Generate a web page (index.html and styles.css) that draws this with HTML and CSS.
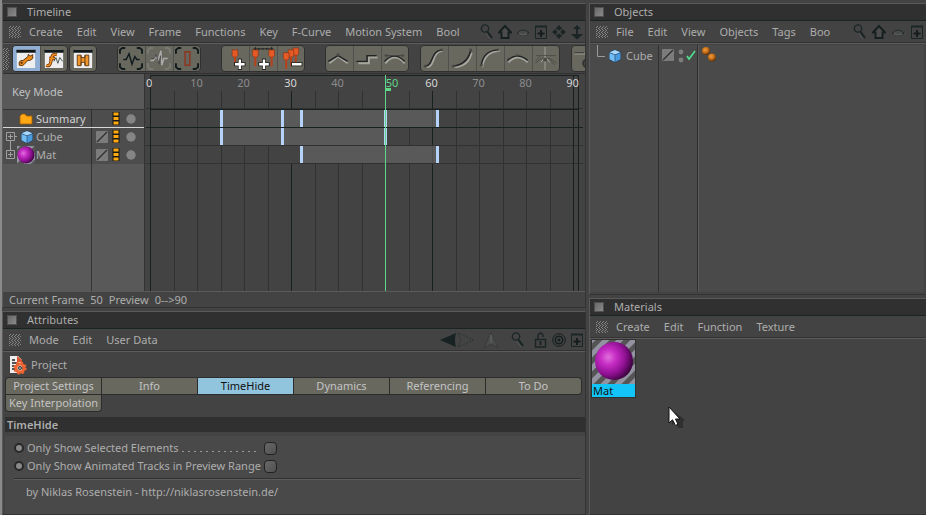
FILE: index.html
```
<!DOCTYPE html>
<html lang="en">
<head>
<meta charset="utf-8">
<title>Timeline</title>
<link rel="stylesheet" href="styles.css">
</head>
<body>
<svg class="defs" aria-hidden="true">
  <defs>
    <pattern id="dots" width="3" height="4" patternUnits="userSpaceOnUse"><path d="M0 1h1M1 0h1M0 3h1M2 2h1" stroke="#858585" transform="translate(0 .5)"/></pattern>
    <pattern id="stripes" width="14" height="14" patternUnits="userSpaceOnUse"><rect width="14" height="14" fill="#555"/><path d="M-4 4L4-4M-4 18L18-4M10 18L18 10" stroke="#9292a0" stroke-width="5"/></pattern>
    <radialGradient id="ball" cx=".35" cy=".4" r=".7"><stop offset="0" stop-color="#e070dc"/><stop offset=".3" stop-color="#c62cc4"/><stop offset=".65" stop-color="#8d1090"/><stop offset="1" stop-color="#2e0030"/></radialGradient>
    <radialGradient id="orange" cx=".4" cy=".35" r=".7"><stop offset="0" stop-color="#f09a3c"/><stop offset=".5" stop-color="#c87018"/><stop offset="1" stop-color="#4a2806"/></radialGradient>
    <symbol id="grip" viewBox="0 0 12 12"><rect width="12" height="12" fill="url(#dots)"/></symbol>
    <symbol id="search" viewBox="0 0 14 16"><circle cx="5" cy="4.500" r="3.700" fill="none" stroke="#1b2525" stroke-width="1.300"/><path d="M7.500 8L12 14" stroke="#1b2525" stroke-width="2.200"/><path d="M6 9L10 15" stroke="#666" stroke-width=".6"/></symbol>
    <symbol id="home" viewBox="0 0 14 16"><path d="M1 8.500L7 2L13 8.500H10.500V14H3.500V8.500Z" fill="#4c4c4c" stroke="#162020" stroke-width="2"/></symbol>
    <symbol id="lens" viewBox="0 0 14 16"><path d="M1 9Q7 3 13 9Q7 14 1 9Z" fill="#4a4a4a" stroke="#222c2c"/><path d="M3 10Q7 12 11 10" fill="none" stroke="#666"/></symbol>
    <symbol id="plus" viewBox="0 0 14 16"><path d="M1.500 2.500H12.500V14.500H1.500Z" fill="none" stroke="#1b2525"/><path d="M1 2.500H13" stroke="#1b2525" stroke-width="2"/><path d="M7 6V13M3.500 9.500H10.500" stroke="#151d1d" stroke-width="2"/></symbol>
    <symbol id="move" viewBox="0 0 14 16"><path d="M7 1L10 4.500L7 6.500L4 4.500ZM7 15L10 11.500L7 9.500L4 11.500ZM0 8L3.500 5L5.500 8L3.500 11ZM14 8L10.500 5L8.500 8L10.500 11Z" fill="#1b2525"/></symbol>
    <symbol id="updown" viewBox="0 0 14 16"><path d="M7 1L11 5H8V10H13L7 15.500L1 10H6V5H3Z" fill="#1b2525"/></symbol>
    <symbol id="cube" viewBox="0 0 14 14"><path d="M7 .5L13 3V10.500L7 13.500L1 10.500V3Z" fill="#1c3d5a"/><path d="M7 1L12.500 3.200L7 5.500L1.500 3.200Z" fill="#a8d8ff"/><path d="M1.500 4L6.700 6V13L1.500 10.300Z" fill="#72bdf6"/><path d="M7.300 6L12.500 4V10.300L7.300 13Z" fill="#4b9ade"/></symbol>
    <symbol id="layer" viewBox="0 0 12 12"><rect width="12" height="12" rx="1" fill="#7d7d7d"/><path d="M1 11L11 1" stroke="#333" stroke-width="1.400"/><path d="M0 6L6 0M6 12L12 6" stroke="#707070" stroke-width=".6"/></symbol>
    <symbol id="film" viewBox="0 0 8 14"><rect x=".5" width="7" height="13" fill="#171717"/><path d="M1.500 2H6.500M1.500 6.500H6.500M1.500 11H6.500" stroke="#ffaa10" stroke-width="3"/></symbol>
    <symbol id="dot" viewBox="0 0 10 10"><circle cx="5" cy="5" r="4.700" fill="#858585"/></symbol>
    <symbol id="folder" viewBox="0 0 14 12"><path d="M1 3L3 1H6L7.500 3H13V11H1Z" fill="#ffa814" stroke="#a35c00" stroke-width=".8"/></symbol>
    <symbol id="sphere" viewBox="0 0 18 18"><rect width="18" height="18" fill="url(#stripes)"/><circle cx="9" cy="9" r="8.500" fill="url(#ball)"/></symbol>
    <symbol id="window" viewBox="0 0 26 26"><rect x="3.500" y="4" width="19" height="19" rx="1" fill="#eee"/><path d="M3 4H23V7H3Z" fill="#0f1719"/></symbol>
    <symbol id="frame" viewBox="0 0 26 26"><path d="M1.500 8V4L4 2H7M19 2H22L24.500 4V8M1.500 18V22L4 24H7M19 24H22L24.500 22V18" fill="none" stroke="currentColor" stroke-width="2"/></symbol>
    <symbol id="pin" viewBox="0 0 8 20"><path d="M1 1H7V7L5 9H3L1 7Z" fill="#e45a26" stroke="#7a2c10" stroke-width=".6"/><path d="M4 8V18" stroke="#b94019" stroke-width="2"/></symbol>
  </defs>
</svg>

<main class="workspace">
  <div class="column">
    <section class="panel timeline">
      <header class="title"><i class="box"></i><h2>Timeline</h2></header>
      <nav class="menu">
        <svg class="grip"><use href="#grip"/></svg>
        <button>Create</button><button>Edit</button><button>View</button><button>Frame</button><button>Functions</button><button>Key</button><button>F-Curve</button><button>Motion System</button><button>Bool</button>
        <div class="tools">
          <svg class="icon"><use href="#search"/></svg><svg class="icon"><use href="#home"/></svg><svg class="icon"><use href="#lens"/></svg><svg class="icon"><use href="#plus"/></svg><svg class="icon"><use href="#move"/></svg><svg class="icon"><use href="#updown"/></svg>
        </div>
      </nav>
      <div class="toolbar">
        <svg class="sidegrip"><rect width="6" height="22" fill="url(#dots)"/></svg>
        <div class="group">
          <button class="on" aria-label="Key mode"><svg viewBox="0 0 26 26"><use href="#window"/><path d="M6 20Q5 14.500 10 15L15 11L15.500 8.500L17.500 10.500L20 9L20 13L17 15L15 15L12 18Q10 22 6 20Z" fill="#e98a16" stroke="#5d3410"/><circle cx="8.500" cy="17.500" r="1.200" fill="#5d3410"/></svg></button>
          <button aria-label="F-Curve mode"><svg viewBox="0 0 26 26"><use href="#window"/><path d="M5 20Q9 22 10 15L11 11Q12 8 16 9M8 13H14" fill="none" stroke="#733810" stroke-width="3.400"/><path d="M5 20Q9 22 10 15L11 11Q12 8 16 9M8 13H14" fill="none" stroke="#f09020" stroke-width="1.800"/><path d="M13 16L15 12L17 18L19 12L22 16" fill="none" stroke="#455" stroke-width="1"/></svg></button>
        </div>
        <div class="group solo">
          <button aria-label="Motion mode"><svg viewBox="0 0 26 26"><use href="#window"/><path d="M7 9.500H11V12H15V9.500H19V20.500H15V17H11V20.500H7Z" fill="#ef962a" stroke="#673c14"/><path d="M11 10V20M15 10V20" stroke="#673c14"/></svg></button>
        </div>
        <div class="group far">
          <button aria-label="Frame all"><svg viewBox="0 0 26 26" color="#111b1d"><use href="#frame"/><path d="M5 14H8L11 8L14 19L17 11L19 14H22" fill="none" stroke="#111b1d" stroke-width="1.500"/></svg></button>
          <button aria-label="Frame selected"><svg viewBox="0 0 26 26" color="#7b7b73"><use href="#frame"/><path d="M4 15H7L10 11L12 15L15 5L16 20L18 13H22" fill="none" stroke="#aaa" stroke-width="1.500"/><path d="M5 13H8L10 9L13 19L15 10" fill="none" stroke="#4a4a4a"/></svg></button>
          <button aria-label="Frame range"><svg viewBox="0 0 26 26" color="#111b1d"><use href="#frame"/><path d="M11 6H16V20H11Z" fill="#66665f" stroke="#8c3620" stroke-width="1.600"/></svg></button>
        </div>
        <div class="group far">
          <button aria-label="Add key"><svg viewBox="0 0 26 26"><use href="#pin" x="9" y="3" width="8" height="20"/><path d="M18 13V25M12 19H24" stroke="#222" stroke-width="4"/><path d="M18 14V24M13 19H23" stroke="#fff" stroke-width="2.400"/></svg></button>
          <button aria-label="Add keys"><svg viewBox="0 0 26 26"><use href="#pin" x="1" y="3" width="8" height="20"/><use href="#pin" x="18" y="3" width="8" height="20"/><path d="M3 3H24M5 1V4M9 2V4M13 2V4M17 2V4M22 1V4" stroke="#222"/><path d="M14 13V25M8 19H20" stroke="#222" stroke-width="4"/><path d="M14 14V24M9 19H19" stroke="#fff" stroke-width="2.400"/></svg></button>
          <button aria-label="Delete key"><svg viewBox="0 0 26 26"><use href="#pin" x="14" y="1" width="8" height="20"/><use href="#pin" x="9" y="3" width="8" height="20"/><use href="#pin" x="4" y="6" width="8" height="20"/><path d="M13 19H25" stroke="#222" stroke-width="4"/><path d="M14 19H24" stroke="#fff" stroke-width="2.400"/></svg></button>
        </div>
        <div class="group far curves">
          <button aria-label="Linear"><svg viewBox="0 0 26 26"><path d="M3 18L12 11L22 18" class="lo"/><path d="M2 16L12 10L22 16" class="hi"/><circle cx="12" cy="9" r="1.500"/></svg></button>
          <button aria-label="Step"><svg viewBox="0 0 26 26"><path d="M4 18H15V12H24" class="lo"/><path d="M2 16H13V10H23" class="hi"/></svg></button>
          <button aria-label="Spline"><svg viewBox="0 0 26 26"><path d="M3 18Q13 6 23 18" class="lo"/><path d="M2 16Q12 5 23 16" class="hi"/><path d="M2 10H22" stroke="#444"/><circle cx="4" cy="10" r="1.500"/><circle cx="21" cy="10" r="1.500"/></svg></button>
        </div>
        <div class="group mid curves">
          <button aria-label="Ease"><svg viewBox="0 0 26 26"><path d="M5 22C15 22 10 6 22 5" class="lo"/><path d="M3 21C13 21 9 5 21 4" class="hi"/><circle cx="4" cy="21" r="1.500"/><circle cx="21" cy="4" r="1.500"/></svg></button>
          <button aria-label="Ease in"><svg viewBox="0 0 26 26"><path d="M5 22Q20 21 23 7" class="lo"/><path d="M3 21Q18 20 22 5" class="hi"/><circle cx="4" cy="21" r="1.500"/><circle cx="22" cy="4" r="1.500"/></svg></button>
          <button aria-label="Ease out"><svg viewBox="0 0 26 26"><path d="M5 22Q7 6 23 5" class="lo"/><path d="M4 20Q6 5 21 4" class="hi"/><circle cx="4" cy="20" r="1.500"/><circle cx="21" cy="4" r="1.500"/></svg></button>
          <button aria-label="Auto tangents"><svg viewBox="0 0 26 26"><path d="M3 17Q13 7 23 17" class="lo"/><path d="M2 15Q12 6 23 15" class="hi"/><circle cx="12" cy="10" r="1.500"/></svg></button>
          <button aria-label="Break tangents"><svg viewBox="0 0 26 26"><path d="M12 1V25" stroke="#85857d" stroke-width="2"/><path d="M2 18Q12 6 24 18M3 10H23M7 10L3 15M17 14L22 20" fill="none" stroke="#4c4c47"/><path d="M8 17L12 11L17 17" fill="none" stroke="#a5a59d"/><circle cx="12" cy="14" r="2"/></svg></button>
        </div>
        <div class="group mid curves">
          <button aria-label="Tangent length"><svg viewBox="0 0 26 26"><path d="M2 8H14M16 5V25" stroke="#8b8b83" stroke-width="2"/><path d="M2 7H12" stroke="#333"/><circle cx="15" cy="18" r="4" fill="none" stroke="#333" stroke-width="2"/></svg></button>
        </div>
      </div>
      <div class="tracks">
        <div class="list">
          <div class="mode">Key Mode</div>
          <div class="track summary"><span class="name"><svg class="folder"><use href="#folder"/></svg>Summary</span><span class="flags"><i class="gap"></i><svg class="film"><use href="#film"/></svg><svg class="dot"><use href="#dot"/></svg></span></div>
          <div class="track"><span class="name"><svg class="tree" viewBox="0 0 14 18"><path d="M3.500 4.500H11.500V12.500H3.500ZM7.500 6V11M5 8.500H10M12 8.500H14M7.500 13V18" fill="none" stroke="#a0a0a0"/></svg><svg class="cube"><use href="#cube"/></svg>Cube</span><span class="flags"><svg class="layer"><use href="#layer"/></svg><svg class="film"><use href="#film"/></svg><svg class="dot"><use href="#dot"/></svg></span></div>
          <div class="track"><span class="name"><svg class="tree" viewBox="0 0 14 18"><path d="M3.500 4.500H11.500V12.500H3.500ZM7.500 6V11M5 8.500H10M7.500 0V4" fill="none" stroke="#a0a0a0"/></svg><svg class="ball"><use href="#sphere"/></svg>Mat</span><span class="flags"><svg class="layer"><use href="#layer"/></svg><svg class="film"><use href="#film"/></svg><svg class="dot"><use href="#dot"/></svg></span></div>
          <div class="rest"></div>
        </div>
        <div class="chart">
          <svg class="plot" shape-rendering="crispEdges">
            <path d="M4 1H432" class="ink"/>
            <path d="M28.500 17V217M51.500 17V217M75.500 17V217M98.500 17V217M122.500 17V217M169.500 17V217M192.500 17V217M216.500 17V217M263.500 17V217M310.500 17V217M333.500 17V217M357.500 17V217M380.500 17V217M404.500 17V217M0 34.500H437M0 71.500H437M0 89.500H437" class="line"/>
            <path d="M75 36H291V53H75ZM75 54H239V71H75ZM155 72H291V89H155Z" fill="#595959"/>
            <path d="M286.500 36V53M286.500 72V89" stroke="#505050"/>
            <path d="M4.500 1V217M145.500 17V35M145.500 90V217M286.500 17V36M286.500 54V71M286.500 90V217M427.500 1V217M432.500 1V217M4 35.500H432M0 53.500H437" class="ink"/>
            <path d="M74 36h3v17h-3zM135 36h3v17h-3zM154 36h3v17h-3zM238 36h3v17h-3zM290 36h3v17h-3zM74 54h3v17h-3zM135 54h3v17h-3zM238 54h3v17h-3zM154 72h3v17h-3zM290 72h3v17h-3z" fill="#b3d4f8"/>
            <path d="M239 1h1v216h-1zM239 14h6v3h-6z" fill="#5ed789"/>
          </svg>
          <div class="ruler"><span class="major">0</span><span>10</span><span>20</span><span class="major">30</span><span>40</span><span class="now">50</span><span class="major">60</span><span>70</span><span>80</span><span class="major">90</span></div>
        </div>
      </div>
      <footer class="status"><span>Current Frame</span><span>50</span><span>Preview</span><span>0--&gt;90</span></footer>
    </section>

    <section class="panel attributes">
      <header class="title"><i class="box"></i><h2>Attributes</h2></header>
      <nav class="menu">
        <svg class="grip"><use href="#grip"/></svg>
        <button>Mode</button><button>Edit</button><button>User Data</button>
        <div class="tools">
          <svg class="wide" viewBox="0 0 36 16"><path d="M0 8L16 1Q14 8 16 15Z" fill="#182222"/><path d="M18 1L34 8L18 15L21 8Z" fill="none" stroke="#2c3434" stroke-dasharray="2 1"/></svg>
          <svg class="arrow" viewBox="0 0 18 18"><path d="M9 1L16 17L9 13L2 17Z" fill="#4b4b4b" stroke="#303838" stroke-dasharray="2 1"/><path d="M9 4V12" stroke="#666"/></svg>
          <svg class="icon find"><use href="#search"/></svg>
          <svg class="icon" viewBox="0 0 14 16"><path d="M1.500 7.500V15H11.500V7.500ZM4 7.500V3Q6.500 -1 9 3V5" fill="none" stroke="#1b2525" stroke-width="1.400"/><path d="M6.500 9V13" stroke="#1b2525" stroke-width="2"/></svg>
          <svg class="icon" viewBox="0 0 14 16"><g fill="none" stroke="#151d1d"><circle cx="7" cy="8" r="6.300"/><circle cx="7" cy="8" r="3.700" stroke-width="1.500"/></g><circle cx="7" cy="8" r="1.500" fill="#151d1d"/></svg>
          <svg class="icon"><use href="#plus"/></svg>
        </div>
      </nav>
      <div class="project"><svg viewBox="0 0 18 20"><path d="M1 1H9L13 5V18H1Z" fill="#eee"/><path d="M3 5H6M3 8H8M3 11H6M3 14H6" stroke="#222" stroke-width="1.500"/><path d="M8 1L13 5V7H8Z" fill="#d6542b"/><circle cx="11" cy="13" r="4" fill="none" stroke="#ef6430" stroke-width="3"/><circle cx="11" cy="13" r="5.700" fill="none" stroke="#ef6430" stroke-width="1.800" stroke-dasharray="2.300 2.180"/><circle cx="11" cy="13" r="2" fill="#333"/><path d="M10 13H12" stroke="#ddd"/></svg>Project</div>
      <div class="tabs"><button>Project Settings</button><button>Info</button><button class="active">TimeHide</button><button>Dynamics</button><button>Referencing</button><button>To Do</button><button>Key Interpolation</button></div>
      <h3>TimeHide</h3>
      <div class="options">
        <div class="option"><i class="knob"></i><label for="sel">Only Show Selected Elements</label><span class="leader"></span><input type="checkbox" id="sel"></div>
        <div class="option"><i class="knob"></i><label for="anim">Only Show Animated Tracks in Preview Range</label><span class="leader none"></span><input type="checkbox" id="anim"></div>
        <hr>
        <p>by Niklas Rosenstein - http://niklasrosenstein.de/</p>
      </div>
    </section>
  </div>

  <div class="column">
    <section class="panel objects">
      <header class="title"><i class="box"></i><h2>Objects</h2></header>
      <nav class="menu">
        <svg class="grip"><use href="#grip"/></svg>
        <button>File</button><button>Edit</button><button>View</button><button>Objects</button><button>Tags</button><button>Boo</button>
        <div class="tools"><svg class="icon"><use href="#search"/></svg><svg class="icon"><use href="#home"/></svg><svg class="icon"><use href="#lens"/></svg><svg class="icon"><use href="#plus"/></svg></div>
      </nav>
      <div class="outliner">
        <div class="names"><svg class="branch" viewBox="0 0 14 20"><path d="M6.500 0V11.500H14" fill="none" stroke="#999"/></svg><svg class="cube"><use href="#cube"/></svg>Cube</div>
        <div class="states"><svg class="layer"><use href="#layer"/></svg><svg class="pair" viewBox="0 0 6 14"><circle cx="3" cy="3" r="2.400" fill="#7d7d7d"/><circle cx="3" cy="11" r="2.400" fill="#7d7d7d"/></svg><svg class="check" viewBox="0 0 10 12"><path d="M1 7L3 10L9 2" fill="none" stroke="#4ee08c" stroke-width="1.600"/></svg></div>
        <div class="tags"><svg viewBox="0 0 16 16"><circle cx="5" cy="5" r="4" fill="url(#orange)"/><circle cx="11" cy="11.500" r="4" fill="url(#orange)"/></svg></div>
      </div>
    </section>

    <section class="panel materials">
      <header class="title"><i class="box"></i><h2>Materials</h2></header>
      <nav class="menu">
        <svg class="grip"><use href="#grip"/></svg>
        <button>Create</button><button>Edit</button><button>Function</button><button>Texture</button>
      </nav>
      <div class="shelf">
        <figure><svg viewBox="0 0 43 44"><rect width="43" height="44" fill="url(#stripes)"/><circle cx="22" cy="21" r="19" fill="url(#ball)"/></svg><figcaption>Mat</figcaption></figure>
        <svg class="pointer" viewBox="0 0 18 24"><path d="M4 4V19L8 16L10 22L15 22L15 15L17 14Z" fill="#262626" opacity=".7"/><path d="M1 1V17L4.500 13.800L7.500 19.500L10 18.300L7.500 13H12Z" fill="#fff" stroke="#111"/></svg>
      </div>
    </section>
  </div>
</main>
</body>
</html>
```
FILE: styles.css
```
* { box-sizing: border-box; }
body {
  margin: 0;
  background: #434343;
  color: #adadad;
  font: 11px/14px "Noto Sans", "Open Sans", sans-serif;
}
button { font: inherit; color: inherit; background: none; border: 0; padding: 0; margin: 0; white-space: nowrap; }
svg { display: block; flex: none; }
.defs { position: absolute; width: 0; height: 0; }
.workspace {
  display: grid;
  grid-template-columns: minmax(0, 1fr) 337px;
  gap: 3px;
  min-height: 100vh;
  padding-top: 3px;
  border-left: 2px solid #8a8a8a;
  overflow: hidden;
}
.column { display: flex; flex-direction: column; gap: 3px; min-width: 0; }
.panel { display: flex; flex-direction: column; border: 1px solid #333; border-top-color: #5a5a5a; border-left-color: #5a5a5a; min-width: 0; }
.timeline { height: 305px; }
.objects { height: 292px; }
.attributes, .materials { flex: 1; }
.objects, .materials { border-right: 0; }
.title { display: flex; align-items: center; gap: 10px; height: 17px; padding-left: 4px; background: #303030; border-bottom: 1px solid #1a2424; }
.box { width: 10px; height: 10px; background: linear-gradient(135deg, #686868, #8a8a8a); border: 1px solid #505050; }
h2 { margin: 0; font: inherit; }
.menu { display: flex; align-items: center; gap: 14px; height: 23px; padding-left: 6px; border-bottom: 1px solid #5c5c5c; overflow: hidden; box-shadow: inset 0 -1px #333; }
.grip { width: 12px; height: 12px; margin-right: -6px; }
.tools { display: flex; align-items: center; gap: 4px; margin-left: auto; padding-right: 1px; }
.icon { width: 14px; height: 16px; }
.objects .tools { padding-right: 2px; gap: 5px; }
.wide { width: 36px; height: 16px; }
.arrow { width: 18px; height: 18px; margin: 0 7px 0 2px; }
.find { margin-right: 5px; }

.toolbar { display: flex; align-items: center; height: 30px; overflow: hidden; border-bottom: 1px solid #303030; }
.sidegrip { width: 6px; height: 22px; margin-right: 3px; }
.group { display: flex; flex: none; border: 1px solid #303030; border-radius: 4px; overflow: hidden; background: #68685f; }
.group button { width: 28px; height: 25px; border-right: 1px solid #50504c; }
.group button:last-child { width: 26px; border-right: 0; }
.group svg { width: 26px; height: 25px; }
.group .on { background: #91aed5; }
.solo { margin-left: 1px; }
.far { margin-left: 20px; }
.mid { margin-left: 11px; }
.curves path.lo { fill: none; stroke: #a5a59d; stroke-width: 2; }
.curves path.hi { fill: none; stroke: #202424; stroke-width: 1.500; }
.curves circle { fill: #484844; }

.tracks { display: flex; flex: 1; min-height: 0; border-bottom: 1px solid #5a5a5a; }
.list { display: flex; flex-direction: column; width: 142px; background: #595959; border-right: 1px solid #333; }
.mode { height: 36px; padding: 11px 9px; border-bottom: 1px solid #333; color: #c0c0c0; }
.track { display: flex; height: 18px; background: #4d4d4d; }
.name { display: flex; align-items: center; width: 89px; border-right: 1px solid #303030; }
.flags { display: flex; align-items: center; gap: 4px; padding-left: 4px; }
.summary { color: #d0d0d0; border-bottom: 1px solid #d8d8d8; }
.summary .name { padding-left: 16px; }
.folder { width: 14px; height: 12px; margin-right: 3px; }
.tree { width: 14px; height: 18px; }
.cube { width: 14px; height: 14px; margin: 0 2px 0 3px; }
.ball { width: 18px; height: 18px; margin-right: 1px; }
.gap, .layer { width: 12px; height: 12px; }
.film { width: 8px; height: 14px; }
.dot { width: 10px; height: 10px; margin-left: 2px; }
.rest { flex: 1; width: 89px; border-right: 1px solid #333; }
.chart { position: relative; flex: 1; min-width: 0; margin-left: 1px; overflow: hidden; }
.plot { position: absolute; width: 100%; height: 100%; }
.ink { stroke: #182020; }
.line { stroke: #313131; }
.ruler { position: relative; display: flex; padding-top: 2px; color: #8b8b8b; }
.ruler span { flex: none; width: 47px; text-align: center; }
.ruler span:first-child { width: 27px; text-align: left; }
.ruler .major { color: #d5d5d5; }
.ruler .now { color: #5ed789; padding-left: 15px; }
.status { display: flex; gap: 6px; height: 15px; padding-left: 6px; line-height: 16px; }

.project { display: flex; align-items: center; gap: 4px; height: 26px; padding-left: 6px; }
.project svg { width: 18px; height: 20px; }
.tabs { display: grid; grid-template-columns: repeat(6, 1fr); gap: 1px; margin: 0 4px 6px 3px; }
.tabs button { height: 16px; background: #68685f; color: #c4c4c4; box-shadow: 0 0 0 1px #2c2c2c; }
.tabs button:first-child { border-top-left-radius: 3px; }
.tabs button:nth-child(6) { border-radius: 0 3px 3px 0; }
.tabs button:last-child { border-radius: 0 0 3px 3px; }
.tabs .active { background: #91c4dd; color: #111; }
h3 { margin: 0 0 4px 2px; padding-left: 2px; background: #303030; font-size: 11px; line-height: 15px; font-weight: 600; }
.options { flex: 1; margin-left: 2px; padding: 3px 0 0 9px; background: #494949; }
.option { display: flex; align-items: center; height: 18px; width: 263px; }
.knob { width: 10px; height: 10px; margin-right: 3px; border: 2px solid #282828; border-radius: 50%; background: #8a8a8a; flex: none; }
.option label { white-space: nowrap; }
.leader { flex: 1; height: 8px; margin: 0 4px 0 3px; background: linear-gradient(90deg, #999 2px, transparent 2px) 0 100% / 6px 1px repeat-x; }
.leader.none { margin: 0; background: none; }
.option input { appearance: none; flex: none; width: 13px; height: 13px; margin: 0; border: 1px solid #222; border-radius: 4px; background: linear-gradient(135deg, #686868, #505050); }
hr { height: 2px; margin: 3px 4px 5px 0; border: 0; background: #5c5c5c; border-top: 1px solid #303030; }
p { margin: 0 0 0 12px; }

.outliner { display: flex; flex: 1; margin: 1px 2px 2px 0; background: #4a4a4a; }
.names { display: flex; width: 69px; height: 100%; padding-left: 1px; border-right: 1px solid #303030; line-height: 22px; }
.branch { width: 14px; height: 20px; }
.names .cube { margin: 4px 4px 0 3px; }
.states { display: flex; align-items: flex-start; width: 39px; padding: 4px 3px; border-right: 1px solid #303030; }
.pair { width: 6px; height: 14px; margin: 0 2px 0 4px; }
.check { width: 10px; height: 12px; }
.tags { flex: 1; padding: 1px 2px; border-left: 1px solid #5a5a5a; }
.tags svg { width: 16px; height: 16px; }
.shelf { position: relative; padding: 0 1px; }
figure { width: 45px; margin: 0; border: 1px solid #303030; color: #111; }
figure svg { width: 100%; height: 44px; }
figcaption { padding-left: 1px; background: #12c4f8; line-height: 13px; }
.pointer { position: absolute; left: 78px; top: 67px; width: 18px; height: 24px; }
```
